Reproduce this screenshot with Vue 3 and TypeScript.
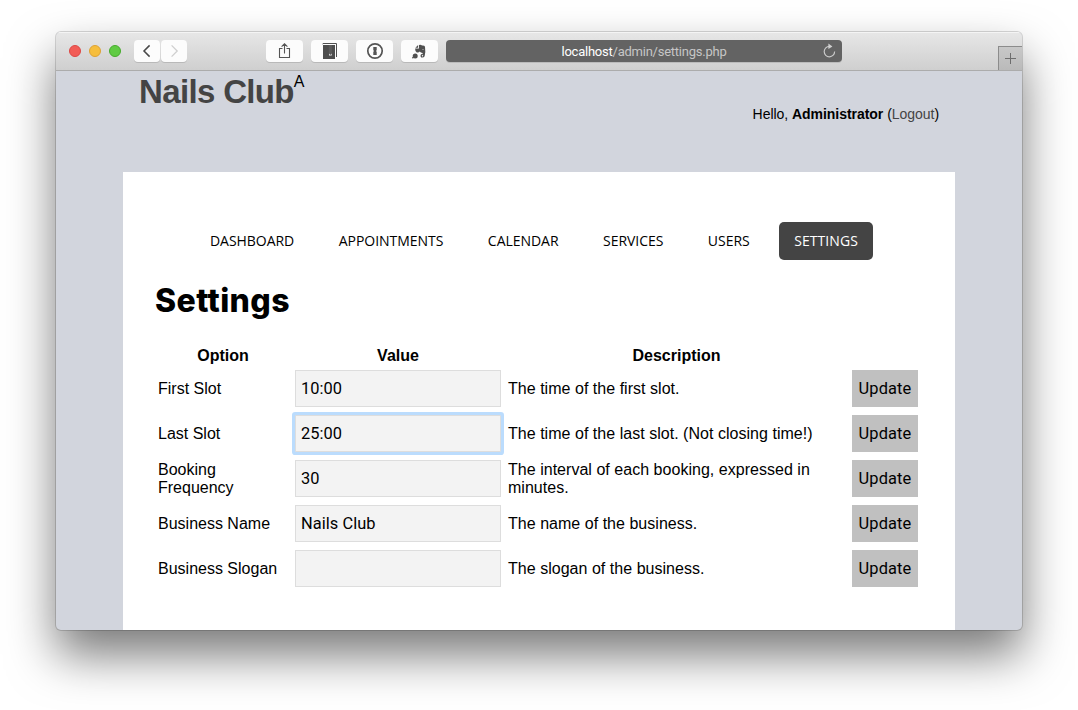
<script setup lang="ts">
import { ref } from 'vue'

interface Setting {
  option: string
  value: string
  description: string
}

const tabs: string[] = ['Dashboard', 'Appointments', 'Calendar', 'Services', 'Users', 'Settings']
const activeTab = ref('Settings')
const focusedRow = ref(1)

const settings = ref<Setting[]>([
  { option: 'First Slot', value: '10:00', description: 'The time of the first slot.' },
  { option: 'Last Slot', value: '25:00', description: 'The time of the last slot. (Not closing time!)' },
  { option: 'Booking Frequency', value: '30', description: 'The interval of each booking, expressed in minutes.' },
  { option: 'Business Name', value: 'Nails Club', description: 'The name of the business.' },
  { option: 'Business Slogan', value: '', description: 'The slogan of the business.' },
])
</script>

<template>
  <div class="desktop">
    <div class="window">
      <div class="toolbar">
        <div class="lights">
          <span class="light red"></span>
          <span class="light yellow"></span>
          <span class="light green"></span>
        </div>
        <div class="history">
          <span class="tool nav-btn">
            <svg width="26" height="22" viewBox="0 0 26 22"><path d="M15.6 5.4 L10 11 L15.6 16.6" fill="none" stroke="#484848" stroke-width="1.5" /></svg>
          </span>
          <span class="tool nav-btn">
            <svg width="26" height="22" viewBox="0 0 26 22"><path d="M10.6 5.4 L16.2 11 L10.6 16.6" fill="none" stroke="#cfcfcf" stroke-width="1.3" /></svg>
          </span>
        </div>
        <div class="extensions">
          <span class="tool">
            <svg width="37" height="22" viewBox="0 0 37 22" fill="none" stroke="#555" stroke-width="1.1">
              <path d="M16.5 8.5 H13.5 V17.5 H23.5 V8.5 H20.5 M18.5 13.5 V4 M15.6 6.7 L18.5 3.8 L21.4 6.7" />
            </svg>
          </span>
          <span class="tool">
            <svg width="37" height="22" viewBox="0 0 37 22">
              <path d="M12 5 H24 V19 H12 Z" fill="#4d4d4d" />
              <path d="M17.8 5 H20.9 V15 L19.35 13.2 L17.8 15 Z" fill="#5b5b5b" />
              <path d="M18 15.6 V13.4 L19.35 15 L20.7 13.4 V15.6 Z" fill="#eee" />
              <path d="M12 4.5 V3.5 H25.5 V17" fill="none" stroke="#505050" stroke-width="1" />
              <path d="M12 4.5 H24.5 V19" fill="none" stroke="#fcfcfc" stroke-width="1" />
            </svg>
          </span>
          <span class="tool">
            <svg width="37" height="22" viewBox="0 0 37 22">
              <circle cx="19" cy="11" r="7.2" fill="none" stroke="#555" stroke-width="1.7" />
              <path d="M17.3 7 H20.7 V10 L20.1 11 L20.7 12 V15 H17.3 V12 L17.9 11 L17.3 10 Z" fill="#555" />
            </svg>
          </span>
          <span class="tool">
            <svg width="37" height="22" viewBox="0 0 37 22" fill="#505050">
              <path d="M17.1 5 V7.7 H14.4 Z" />
              <path d="M18 5 Q20 4.4 21 5.6 Q23.5 5.3 24 6.8 Q24.8 12 23.6 16.2 Q23 17.8 20.3 17.5 Q19.2 16.8 19.6 15 Q20.2 13.8 21.6 14.2 V13 Q19.5 12.8 18.8 11.6 Q17.6 13 15.8 12.4 Q14 11.5 14.1 8.5 H18 Z" />
              <circle cx="22" cy="9.6" r=".5" fill="#ddd" />
              <circle cx="21.5" cy="15.8" r=".7" fill="#fafafa" />
              <circle cx="14.2" cy="16" r="2.5" />
              <circle cx="11.8" cy="17.7" r=".8" />
            </svg>
          </span>
        </div>
        <div class="address">
          <span class="url"><b>localhost</b>/admin/settings.php</span>
          <svg class="reload" width="14" height="16" viewBox="0 0 14 16">
            <path d="M7.5 3.4 A5.2 5.2 0 1 0 12.6 8.4" fill="none" stroke="#c8c8c8" stroke-width="1.2" />
            <path d="M6.4 .5 L10.4 3.4 L6.4 6 Z" fill="#d0d0d0" />
          </svg>
        </div>
        <span class="new-tab">
          <svg width="23" height="24" viewBox="0 0 23 24"><path d="M6 11.5 H17 M11.5 6 V17" stroke="#6d6d6d" stroke-width="1" /></svg>
        </span>
      </div>

      <div class="page">
        <header class="masthead">
          <h1 class="brand">Nails Club</h1>
          <span class="brand-mark">A</span>
          <p class="greeting">Hello, <b>Administrator</b> (<a>Logout</a>)</p>
        </header>

        <main class="content">
          <nav class="tabs">
            <a v-for="tab in tabs" :key="tab" class="tab" :class="{ active: tab === activeTab }" @click="activeTab = tab">{{ tab }}</a>
          </nav>
          <h2 class="heading">Settings</h2>
          <section class="settings">
            <div class="row head">
              <b>Option</b><b>Value</b><b>Description</b>
            </div>
            <div v-for="(item, i) in settings" :key="item.option" class="row">
              <span>{{ item.option }}</span>
              <input v-model="item.value" class="field" :class="{ focused: focusedRow === i }" type="text" @focus="focusedRow = i" />
              <span class="description">{{ item.description }}</span>
              <button class="update" type="button">Update</button>
            </div>
          </section>
        </main>
      </div>
    </div>
  </div>
</template>

<style>
body {
  margin: 0;
  background: #fff;
}
</style>

<style scoped>
* {
  box-sizing: border-box;
}

.desktop {
  height: 710px;
  padding: 32px 56px 0;
  overflow: hidden;
  background: #fff;
  font-family: "Liberation Sans", Arial, sans-serif;
  color: #000;
}

.window {
  display: flex;
  flex-direction: column;
  height: 598px;
  border-radius: 5px;
  overflow: hidden;
  background: #d2d5dd;
  box-shadow: 0 0 0 1px rgba(0, 0, 0, 0.15), 0 25px 48px rgba(0, 0, 0, 0.53);
}

.toolbar {
  display: flex;
  flex: none;
  align-items: flex-start;
  height: 39px;
  padding: 8px 0 0 13px;
  background: linear-gradient(#e7e7e7, #cfcfcf);
  border-bottom: 1px solid #acacac;
  box-shadow: inset 0 1px 0 #f4f4f4;
}

.lights {
  display: flex;
  gap: 8px;
  padding-top: 5px;
}

.light {
  width: 12px;
  height: 12px;
  border: 1px solid;
  border-radius: 50%;
}

.red {
  background: #f25c56;
  border-color: #dd4744;
}

.yellow {
  background: #f6be3d;
  border-color: #dea233;
}

.green {
  background: #60cb43;
  border-color: #46ab2c;
}

.history {
  display: flex;
  gap: 1px;
  margin-left: 13px;
}

.tool {
  display: flex;
  width: 37px;
  height: 22px;
  border-radius: 4px;
  background: #fcfcfc;
  box-shadow: 0 1px 0 #b9b9b9;
}

.nav-btn {
  width: 26px;
}

.extensions {
  display: flex;
  gap: 8px;
  margin-left: 79px;
}

.address {
  display: flex;
  align-items: center;
  width: 396px;
  height: 22px;
  margin-left: 8px;
  padding-right: 6px;
  border-radius: 4px;
  background: #636363;
  box-shadow: 0 1px 0 #bbb;
}

.url {
  flex: 1;
  padding-left: 20px;
  color: #c6c6c6;
  font: 13px/22px Roboto, sans-serif;
  letter-spacing: -0.24px;
  text-align: center;
  transform: translateY(0.5px);
}

.url b {
  color: #fff;
  font-weight: 400;
}

.new-tab {
  width: 24px;
  height: 24px;
  margin: 6px 0 0 auto;
  background: linear-gradient(#c8c8c8, #bababa);
  border: solid #8c8c8c;
  border-width: 1px 0 0 1px;
}

.page {
  flex: 1;
}

.masthead {
  display: flex;
  height: 101px;
  padding: 0 83px;
}

.brand {
  margin: 0;
  padding-top: 2px;
  color: #444;
  font-size: 33px;
  line-height: 38px;
  letter-spacing: -0.65px;
}

.brand-mark {
  padding-top: 1px;
  font-size: 16px;
  line-height: 20px;
}

.greeting {
  margin: 34px 0 0 auto;
  font-size: 14px;
  line-height: 18px;
  letter-spacing: -0.04px;
}

.greeting a {
  color: #444;
}

.content {
  height: 458px;
  margin: 0 67px;
  padding: 50px 35px 0;
  background: #fff;
}

.tabs {
  display: flex;
  justify-content: space-between;
  width: 678px;
  margin-left: 37px;
}

.tab {
  padding: 0 15px;
  border-radius: 5px;
  font: 14px/38px "Open Sans", sans-serif;
  letter-spacing: -0.04px;
  text-transform: uppercase;
}

.tab.active {
  background: #444;
  color: #fff;
  letter-spacing: 0.08px;
}

.heading {
  margin: 20px 0 0 -3px;
  font: 800 32px/42px Inter, sans-serif;
  letter-spacing: 0.4px;
}

.settings {
  margin-top: 24px;
}

.row {
  display: grid;
  grid-template-columns: 130px 206px 337px 66px;
  gap: 7px;
  align-items: center;
  height: 45px;
  font-size: 16px;
  line-height: 18px;
}

.head {
  height: 20px;
  text-align: center;
}

.description {
  letter-spacing: 0.03px;
}

.field {
  width: 206px;
  height: 37px;
  padding: 0 5px;
  border: 1px solid #ddd;
  outline: none;
  background: #f3f3f3;
  color: #000;
  font: 16.4px/20px Roboto, sans-serif;
  letter-spacing: 0.06px;
}

.focused {
  box-shadow: 0 0 0 3px #bbdcfd;
  border-radius: 1px;
}

.update {
  height: 37px;
  padding: 0;
  border: 0;
  background: #c0c0c0;
  color: #000;
  font: 16.4px/20px Roboto, sans-serif;
  letter-spacing: 0.15px;
}
</style>
